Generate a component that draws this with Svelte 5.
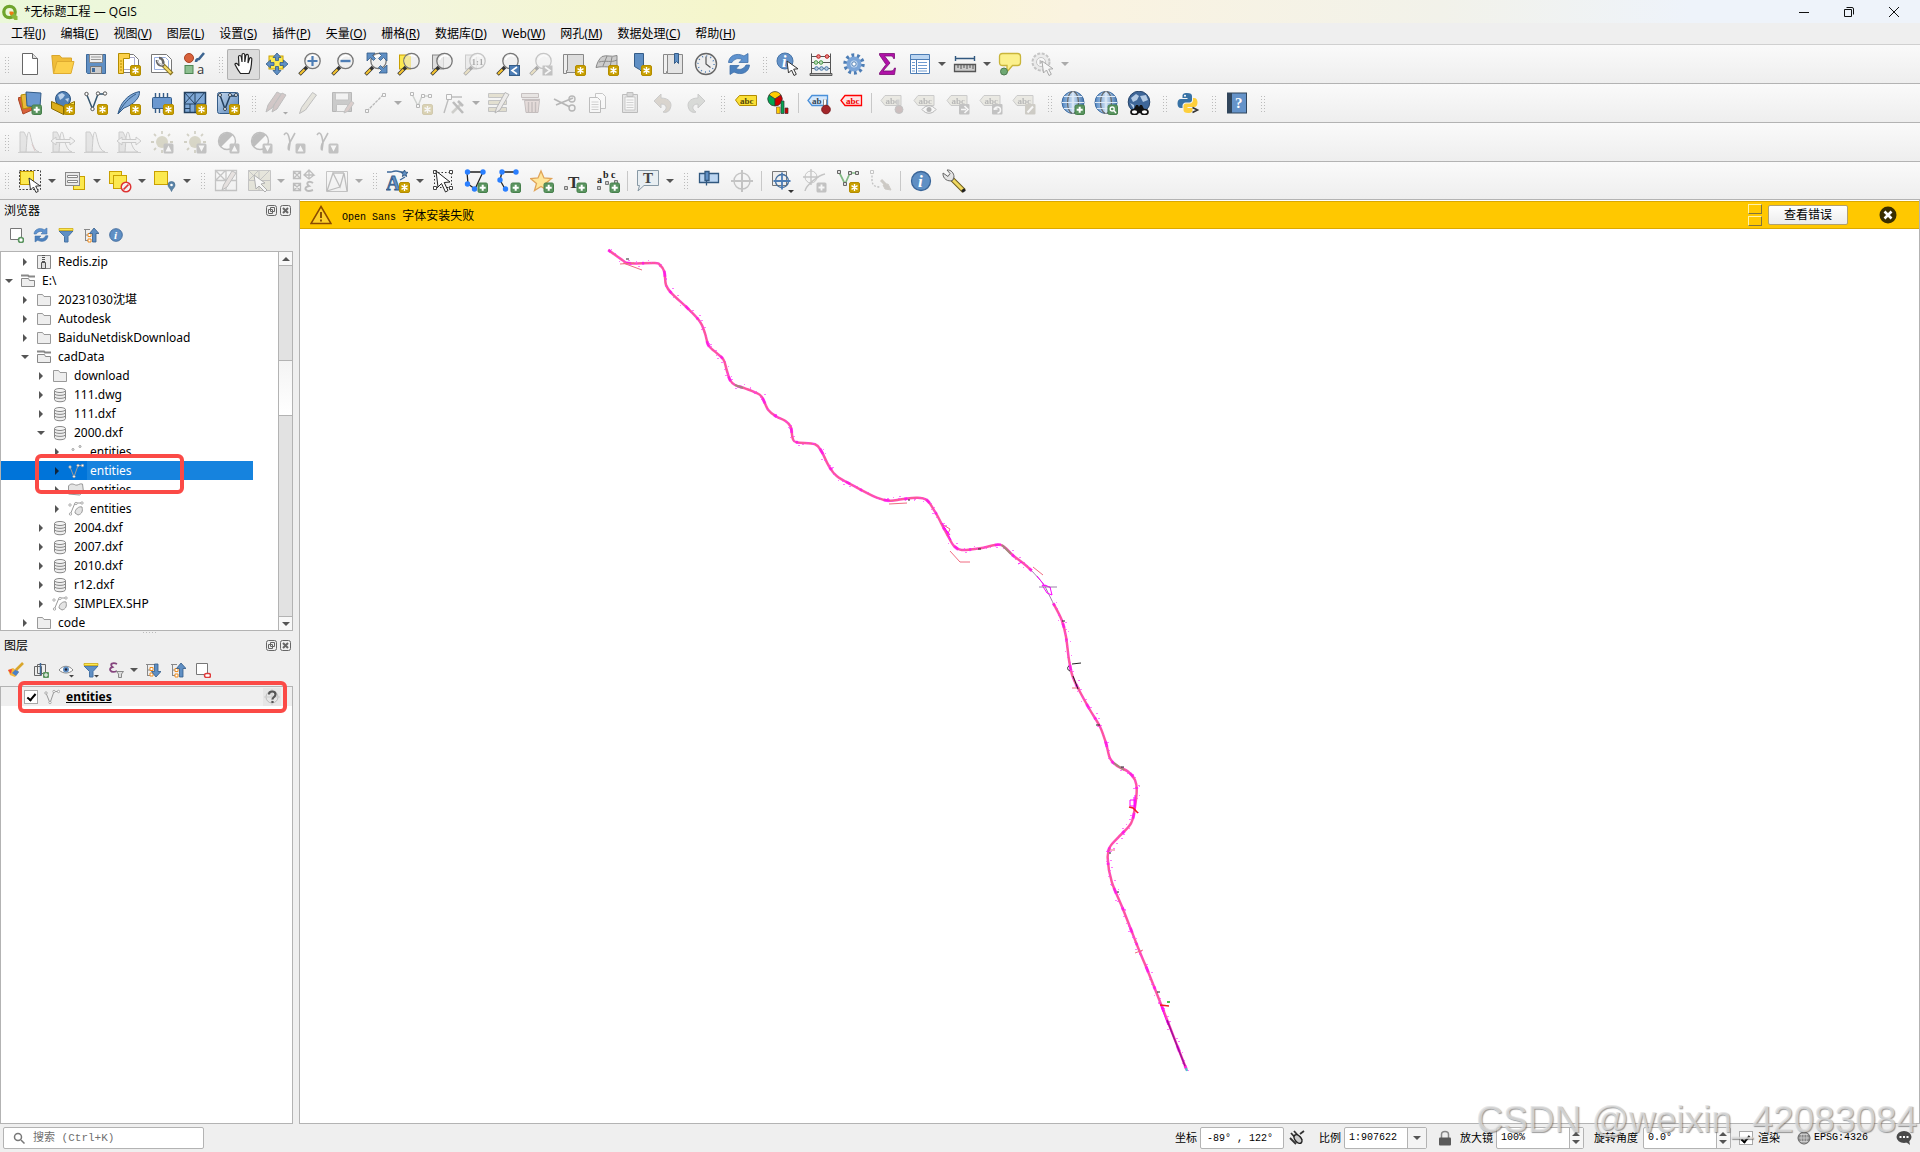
<script lang="ts">
  type Item = { icon?: string; label?: string; drop?: boolean; off?: boolean; active?: boolean; sep?: boolean };

  // "name!" = disabled, "name>" = has a drop-down, "name*" = pressed, "|" = separator
  const parse = (list: string): Item[] =>
    list.split(' ').map((word) =>
      word === '|'
        ? { sep: true }
        : {
            icon: word.replace(/[!>*]/g, ''),
            label: word.replace(/[!>*]/g, '').replace(/-/g, ' '),
            off: word.includes('!'),
            drop: word.includes('>'),
            active: word.includes('*')
          }
    );

  const toolbars: Item[][][] = [
    [
      'new open save layout layout-manager style',
      'hand* pan-selection zoom-in zoom-out zoom-full zoom-selection zoom-layer zoom-native! zoom-last zoom-next! new-map new-3d new-bookmark bookmarks clock refresh',
      'identify abacus gear sigma table> ruler> tip action!>'
    ],
    [
      'sources geopackage shapefile spatialite memory mesh gpx',
      'edits! pencil! save-edits! add-line!> add-vertex! vertex-tool!> multi-edit! trash! cut! copy! paste! undo! redo!',
      'label diagram | pin-label red-label | pin-off! show-label! move-label! rotate-label! edit-label!',
      'globe-add globe-search globe-find',
      'python',
      'help',
      ''
    ],
    ['hist-a! hist-stretch! hist-b! hist-stretch! sun-up! sun-down! contrast-up! contrast-down! gamma-up! gamma-down!'],
    [
      'select> select-form> deselect> select-place>',
      'mesh-edit! mesh-select!> mesh-transform! mesh-force!>',
      'annotation> edit-nodes polygon polyline star text text-line | callout>',
      'georef cross! | snap-area snap-cross! vertex-new trace! | info wrench'
    ]
  ].map((bar) => bar.map(parse));

  const menus = [
    ['工程', 'J'], ['编辑', 'E'], ['视图', 'V'], ['图层', 'L'], ['设置', 'S'], ['插件', 'P'], ['矢量', 'O'],
    ['栅格', 'R'], ['数据库', 'D'], ['Web', 'W'], ['网孔', 'M'], ['数据处理', 'C'], ['帮助', 'H']
  ];

  const tree = [
    { d: 1, icon: 'zip', name: 'Redis.zip' },
    { d: 0, icon: 'folder-open', name: 'E:\\', open: true },
    { d: 1, icon: 'folder', name: '20231030沈堪' },
    { d: 1, icon: 'folder', name: 'Autodesk' },
    { d: 1, icon: 'folder', name: 'BaiduNetdiskDownload' },
    { d: 1, icon: 'folder-open', name: 'cadData', open: true },
    { d: 2, icon: 'folder', name: 'download' },
    { d: 2, icon: 'db', name: '111.dwg' },
    { d: 2, icon: 'db', name: '111.dxf' },
    { d: 2, icon: 'db', name: '2000.dxf', open: true },
    { d: 3, icon: 'points', name: 'entities' },
    { d: 3, icon: 'lines', name: 'entities', selected: true },
    { d: 3, icon: 'polys', name: 'entities' },
    { d: 3, icon: 'geoms', name: 'entities' },
    { d: 2, icon: 'db', name: '2004.dxf' },
    { d: 2, icon: 'db', name: '2007.dxf' },
    { d: 2, icon: 'db', name: '2010.dxf' },
    { d: 2, icon: 'db', name: 'r12.dxf' },
    { d: 2, icon: 'geoms', name: 'SIMPLEX.SHP' },
    { d: 1, icon: 'folder', name: 'code' }
  ];

  type P = [number, number];
  const third = (ox: number, oy: number, flat: number[]): P[] => {
    const out: P[] = [];
    for (let i = 0; i < flat.length; i += 2) out.push([ox + flat[i] / 3, oy + flat[i + 1] / 3]);
    return out;
  };
  const upper = third(600, 230, [25, 60, 70, 92, 88, 100, 165, 99, 180, 105, 193, 125, 198, 165, 215, 190, 260, 232, 300, 275, 315, 310, 325, 345, 345, 365, 370, 388, 380, 420, 390, 450, 405, 465, 435, 475, 465, 487, 485, 500, 505, 540, 530, 560, 555, 572, 572, 590, 578, 625, 590, 637, 645, 643, 665, 665, 685, 705, 710, 738, 760, 767, 830, 803, 870, 812, 905, 808, 950, 803, 980, 810, 1005, 845, 1030, 892]);
  const middle = third(880, 480, [190, 142, 205, 170, 222, 198, 245, 210, 300, 205, 350, 194, 372, 200, 400, 227, 430, 250, 455, 272]);
  const gap = third(880, 480, [455, 272, 490, 312, 505, 340, 520, 370]);
  const lower = [
    ...third(880, 480, [520, 370, 545, 420, 558, 470, 567, 540, 578, 590, 597, 630, 630, 690, 660, 740]),
    ...third(1050, 700, [168, 130, 180, 175, 200, 197, 235, 215, 255, 240, 260, 270, 255, 320, 243, 370, 205, 412, 180, 440, 173, 475, 185, 545, 220, 630, 265, 745, 290, 805, 330, 905, 360, 982, 410, 1110])
  ];
  function smooth(p: P[]): string {
    let d = `M${p[0][0].toFixed(1)} ${p[0][1].toFixed(1)}`;
    for (let i = 0; i < p.length - 1; i++) {
      const a = p[Math.max(i - 1, 0)], b = p[i], c = p[i + 1], e = p[Math.min(i + 2, p.length - 1)];
      const n = [b[0] + (c[0] - a[0]) / 6, b[1] + (c[1] - a[1]) / 6, c[0] - (e[0] - b[0]) / 6, c[1] - (e[1] - b[1]) / 6, c[0], c[1]];
      d += 'C' + n.map((v) => v.toFixed(1)).join(' ');
    }
    return d;
  }
  // small survey marks scattered along the alignment
  function marks(p: P[]): string {
    let d = '', seed = 7;
    const rnd = () => (seed = (seed * 16807) % 2147483647) / 2147483647;
    for (let i = 0; i < p.length - 1; i++) {
      const [x0, y0] = p[i], [x1, y1] = p[i + 1];
      const steps = Math.max(1, Math.round(Math.hypot(x1 - x0, y1 - y0) / 4));
      for (let s = 0; s < steps; s++) {
        const t = (s + rnd()) / steps;
        const x = x0 + (x1 - x0) * t + (rnd() - 0.5) * 7, y = y0 + (y1 - y0) * t + (rnd() - 0.5) * 6;
        d += `M${x.toFixed(0)} ${y.toFixed(0)}h${rnd() > 0.5 ? 2 : 1}`;
      }
    }
    return d;
  }
  const routes = [upper, middle, lower];
  const route = routes.map(smooth).join('');
  const specks = routes.map(marks).join('');
</script>

<svg class="paints" width="0" height="0" aria-hidden="true">
  <defs>
    <linearGradient id="g-blue" x2="1" y2="1"><stop offset="0" stop-color="#c5d9ef" /><stop offset="1" stop-color="#5583b8" /></linearGradient>
    <linearGradient id="g-globe"><stop offset="0" stop-color="#4d83c0" /><stop offset=".5" stop-color="#cfe2f5" /><stop offset="1" stop-color="#4173ad" /></linearGradient>
  </defs>
</svg>
<svg class="symbols" aria-hidden="true">
  <symbol id="b-new" viewBox="0 0 24 24"><rect x="13.5" y="13.5" width="10" height="10" rx="1.5" fill="#c9a000" stroke="#b38c00" /><path d="M18.5 15v7M15.5 16.7l6 3.600M21.5 16.7l-6 3.600" stroke="#fff" stroke-width="1.400" /></symbol>
  <symbol id="b-add" viewBox="0 0 24 24"><rect x="14" y="14" width="9.5" height="9.5" rx="1.5" fill="#5b9560" stroke="#47804c" /><path d="M18.7 15.7v6M15.7 18.7h6" stroke="#fff" stroke-width="2" /></symbol>
  <symbol id="b-up" viewBox="0 0 24 24"><rect x="13.5" y="13.5" width="10" height="10" rx="1.5" fill="#777" /><path d="M15.5 21.5l3-6 3 6z" fill="#fff" /></symbol>
  <symbol id="b-down" viewBox="0 0 24 24"><rect x="13.5" y="13.5" width="10" height="10" rx="1.5" fill="#777" /><path d="M15.5 15.5l3 6 3-6z" fill="#fff" /></symbol>
  <symbol id="b-lens" viewBox="0 0 24 24"><path d="M1.5 22.5l7.5-7.5" stroke="#333" stroke-width="3.600" /><path d="M2 22l4.500-4.500" stroke="#f5c430" stroke-width="2.200" /><circle cx="14.5" cy="9" r="7.7" fill="#eee" fill-opacity=".75" stroke="#777" stroke-width="1.300" /><path d="M9.500 8a5.500 5.500 0 0 1 9-3" fill="none" stroke="#fff" stroke-width="1.500" /></symbol>
  <symbol id="b-cursor" viewBox="0 0 24 24"><path d="M11 9l1.500 12 3-3 2.500 5.500 2.300-1.200-2.600-5.100 4.300-.4z" fill="#fff" stroke="#333" /></symbol>

  <symbol id="i-new" viewBox="0 0 24 24"><path d="M4.500 1.500h10l5 5v16h-15z" fill="#fff" stroke="#666" /><path d="M14.500 1.500v5h5" fill="#ddd" stroke="#666" /></symbol>
  <symbol id="i-open" viewBox="0 0 24 24"><path d="M2.500 21.500L.8 3.500h8l2 2.500h9.700v4" fill="#f0bd39" stroke="#d9a62c" /><path d="M2.500 21.500l3.500-12h17l-3 12z" fill="#fcd04b" stroke="#dfac30" /></symbol>
  <symbol id="i-save" viewBox="0 0 24 24"><path d="M2.500 2.500h19v19h-18l-1-1z" fill="#5f8fc4" stroke="#3f6a9a" /><path d="M5.500 2.500h13v8h-13z" fill="#eee" stroke="#888" /><path d="M7 5h10M7 7.500h10" stroke="#999" /><path d="M6.500 14.500h11v7h-11z" fill="#ccc" stroke="#777" /><path d="M8 16h3v4H8z" fill="#3f6a9a" /></symbol>
  <symbol id="i-layout" viewBox="0 0 24 24"><path d="M2.500 2.500h14l5 5v13h-19z" fill="#fff" stroke="#777" /><path d="M4.500 5.500h13v12h-11" fill="none" stroke="#aac" /><path d="M1.500 1.500h11v5h-6v15h-5z" fill="#fcd04b" stroke="#b38c00" /><path d="M3 9h2M3 12h2M3 15h2M3 18h2" stroke="#b38c00" /><use href="#b-new" /></symbol>
  <symbol id="i-layout-manager" viewBox="0 0 24 24"><path d="M1.500 2.500h15l5 5v13h-20z" fill="#fff" stroke="#777" /><path d="M4.500 5.500h11l3 3v9h-14z" fill="none" stroke="#9ab0e0" /><path d="M13 13l9 9" stroke="#8a7420" stroke-width="4" /><path d="M14 14l7 7" stroke="#f5dc6a" stroke-width="2.200" /><path d="M7 8c0 5 4 6 7 5M9 6c3 0 5 3 4 6" fill="none" stroke="#666" stroke-width="2.600" /><path d="M7.500 8.500c1 4 4 5 6 4" fill="none" stroke="#fff" /></symbol>
  <symbol id="i-style" viewBox="0 0 24 24"><circle cx="6" cy="6" r="4.500" fill="#d9623b" stroke="#a94323" /><rect x="2" y="13.500" width="8" height="8" fill="#8dbf90" stroke="#4c8552" /><path d="M13 10c0-3 2-3 3-3l5-6" fill="none" stroke="#3d6591" stroke-width="2.600" /><text x="14" y="21.500" font-family="Open Sans" font-size="13" fill="#333">a</text></symbol>

  <symbol id="i-hand" viewBox="0 0 24 24"><path d="M8.500 21.500c-3-4-4.500-7-5.500-9 0-2 2.500-1.500 4 1.500L6.500 5c0-2 2.500-2 2.800 0l.7 5V3c0-2 2.700-2 2.800 0v7l1-6.500c.4-1.800 2.700-1.300 2.600.5L16 11l1.500-4.500c.7-1.500 2.700-.8 2.300 1C19 14 20 16 17 21.500z" fill="#fff" stroke="#222" stroke-width="1.200" /></symbol>
  <symbol id="i-pan-selection" viewBox="0 0 24 24"><rect x="4" y="4" width="14" height="13" fill="#fce94f" stroke="#c9a000" /><path d="M12 1l4 4.500h-2.500v3h-3v-3H8zM12 23l4-4.500h-2.500v-4h-3v4H8zM1 12l4.500-4v2.500H9v3H5.500V16zM23 12l-4.500-4v2.500H15v3h3.500V16z" fill="#5f8fc4" stroke="#345c88" stroke-width=".8" /></symbol>
  <symbol id="i-zoom-in" viewBox="0 0 24 24"><use href="#b-lens" /><path d="M14.500 4v10M9.500 9h10" stroke="#4d7db5" stroke-width="2.200" /></symbol>
  <symbol id="i-zoom-out" viewBox="0 0 24 24"><use href="#b-lens" /><path d="M9.500 9h10" stroke="#4d7db5" stroke-width="2.400" /></symbol>
  <symbol id="i-zoom-full" viewBox="0 0 24 24"><use href="#b-lens" /><path d="M3 1h8L8.500 3.500l3 3-2 2-3-3L3 9zM23 1h-8l2.500 2.500-3 3 2 2 3-3L23 9zM23 21h-8l2.500-2.500-3-3 2-2 3 3L23 13z" fill="#5f8fc4" stroke="#345c88" stroke-width=".8" /></symbol>
  <symbol id="i-zoom-selection" viewBox="0 0 24 24"><rect x="2.500" y="3" width="11" height="14" fill="#fce94f" stroke="#c9a000" /><use href="#b-lens" /><path d="M9 4h5v11c-5 0-7-5-7-7z" fill="#f3e58b" opacity=".8" /></symbol>
  <symbol id="i-zoom-layer" viewBox="0 0 24 24"><rect x="2.500" y="3" width="11" height="14" fill="#ddd" stroke="#888" /><use href="#b-lens" /></symbol>
  <symbol id="i-zoom-native" viewBox="0 0 24 24"><rect x="2.500" y="3" width="11" height="14" fill="#ddd" stroke="#888" /><use href="#b-lens" /><text x="8.500" y="12.500" font-family="Liberation Serif" font-weight="bold" font-size="9" fill="#333">1:1</text></symbol>
  <symbol id="i-zoom-last" viewBox="0 0 24 24"><use href="#b-lens" /><rect x="13.500" y="13.500" width="10" height="10" fill="#4d7db5" stroke="#345c88" /><path d="M21 15l-5 3.500 5 3.500" fill="none" stroke="#fff" stroke-width="1.600" /></symbol>
  <symbol id="i-zoom-next" viewBox="0 0 24 24"><use href="#b-lens" /><rect x="13.500" y="13.500" width="10" height="10" fill="#777" /><path d="M16 15l5 3.500-5 3.500" fill="none" stroke="#fff" stroke-width="1.600" /></symbol>
  <symbol id="i-new-map" viewBox="0 0 24 24"><path d="M4.500 2.500h17v18h-17z" fill="#ddd" stroke="#888" /><path d="M1.500 2.500h4v16h-1v3h-3z" fill="#eee" stroke="#888" /><use href="#b-new" /></symbol>
  <symbol id="i-new-3d" viewBox="0 0 24 24"><path d="M7 4.500c5-2 9 1 15-1v10c-6 3-13 0-21 2C2 11 4 7 7 4.500z" fill="#ccc" stroke="#888" /><path d="M4 10c7-2 12 1 18-2M12 4L8 14M17 5l-2 10" fill="none" stroke="#888" /><use href="#b-new" /></symbol>
  <symbol id="i-new-bookmark" viewBox="0 0 24 24"><path d="M6.500 1.500h9v20l-4-4-5-3z" fill="#5f8fc4" stroke="#345c88" /><use href="#b-new" /></symbol>
  <symbol id="i-bookmarks" viewBox="0 0 24 24"><path d="M6.500 2.500h15v19h-15z" fill="#e4e4e4" stroke="#888" /><path d="M2.500 2.500h4v17h-1v2h-3z" fill="#f0f0f0" stroke="#888" /><path d="M13.500 1.500h4v10l-2-2-2 2z" fill="#5f8fc4" stroke="#345c88" /></symbol>
  <symbol id="i-clock" viewBox="0 0 24 24"><circle cx="12" cy="12" r="10.500" fill="#eee" stroke="#666" stroke-width="1.400" /><circle cx="12" cy="12" r="8" fill="none" stroke="#4d7db5" stroke-width="1.500" stroke-dasharray="1 3.190" /><path d="M12 4.500V12l4.500 3.500" fill="none" stroke="#555" stroke-width="1.200" /></symbol>
  <symbol id="i-refresh" viewBox="0 0 24 24"><path d="M1.500 10.500C2 4 9 0 17 4l4-2.500v9h-9l3-3c-4-2-8-.5-10 3z" fill="#5f93cf" stroke="#3f6fa8" stroke-width=".8" /><path d="M22.500 13c-.5 7-7.500 11-15.500 7l-4 2.500v-9h9l-3 3c4 2 8 .5 10-3.500z" fill="#4b80bd" stroke="#3f6fa8" stroke-width=".8" /></symbol>

  <symbol id="i-identify" viewBox="0 0 24 24"><circle cx="9" cy="9" r="8" fill="#6593c9" stroke="#4674a8" /><text x="6" y="14.500" font-family="Liberation Serif" font-weight="bold" font-style="italic" font-size="16" fill="#fff">i</text><use href="#b-cursor" /></symbol>
  <symbol id="i-abacus" viewBox="0 0 24 24"><path d="M2.500 22V1.500M21.500 22V1.500M2 4.500h20M2 10.500h20M2 16.500h20" stroke="#555" fill="none" /><path d="M1 21.500h22v2H1z" fill="#aaa" stroke="#444" stroke-width=".8" /><g fill="#e88" stroke="#b22"><circle cx="9.500" cy="4.500" r="1.800" /><circle cx="18" cy="4.500" r="1.800" /></g><g fill="#bdb" stroke="#4a9a4a"><circle cx="7" cy="10.500" r="1.800" /><circle cx="12" cy="10.500" r="1.800" /></g><g fill="#bcd" stroke="#47a"><circle cx="7.500" cy="16.500" r="1.800" /><circle cx="12.500" cy="16.500" r="1.800" /><circle cx="17.500" cy="16.500" r="1.800" /></g></symbol>
  <symbol id="i-gear" viewBox="0 0 24 24"><circle cx="12" cy="12" r="8.700" fill="none" stroke="#4d7db5" stroke-width="4" stroke-dasharray="2.700 2.766" /><circle cx="12" cy="12" r="5.500" fill="#c9dcf1" stroke="#7ba5d8" stroke-width="4" /><circle cx="12" cy="12" r="2.200" fill="#fff" stroke="#4d7db5" /></symbol>
  <symbol id="i-sigma" viewBox="0 0 24 24"><path d="M4.500 1.500h15v5h-1c-.5-2-1.500-2.500-3-2.500H9.500l5.500 7-7 8h8c2 0 2.800-1 3.500-3h1l-1 6.500h-15v-1.500L11 12.500 4.500 3z" fill="#b012a8" stroke="#7a0c74" stroke-width=".8" /></symbol>
  <symbol id="i-table" viewBox="0 0 24 24"><path d="M2.500 2.500h19v19h-19z" fill="#fff" stroke="#4d7db5" /><path d="M3 3h18v4H3z" fill="#bcd6f2" /><path d="M2.500 7.500h19M8.500 7v14" stroke="#4d7db5" /><path d="M4 10.500h3M10 10.500h9M4 13.500h3M10 13.500h9M4 16.500h3M10 16.500h9M4 19h3M10 19h9" stroke="#6f9bd0" /></symbol>
  <symbol id="i-ruler" viewBox="0 0 24 24"><path d="M2 6.500h20M2.500 4v5M21.500 4v5" stroke="#31587f" stroke-width="1.400" /><path d="M1.500 12.500h21v7h-21z" fill="#ccc" stroke="#555" stroke-width="1.300" /><path d="M5 13v3M8 13v4M11 13v3M14 13v4M17 13v3M20 13v4" stroke="#555" /></symbol>
  <symbol id="i-tip" viewBox="0 0 24 24"><path d="M4.500 1.500h15c2 0 3 1 3 3v6c0 2-1 3-3 3h-5L9 20v-6.500H4.500c-2 0-3-1-3-3v-6c0-2 1-3 3-3z" fill="#fbf08c" stroke="#c9b53a" stroke-width="1.300" /><circle cx="6" cy="19.500" r="3.500" fill="#6fa873" stroke="#4c7a50" /></symbol>
  <symbol id="i-action" viewBox="0 0 24 24"><circle cx="10" cy="10" r="8.500" fill="#ddd" stroke="#777" stroke-width="2" stroke-dasharray="3 1.500" /><circle cx="10" cy="10" r="4.500" fill="#fff" stroke="#777" /><path d="M8.500 7.500v5l4-2.500z" fill="#666" /><use href="#b-cursor" /></symbol>

  <symbol id="i-sources" viewBox="0 0 24 24"><path d="M0 7l9-3 5 15-9 4z" fill="#d9623b" stroke="#a94323" /><path d="M3 4l11-2v14l-9 2z" fill="#e9b93b" stroke="#b38c00" /><path d="M8 1l15 1-1 14-13-1z" fill="#6b98cf" stroke="#345c88" /><use href="#b-add" /></symbol>
  <symbol id="i-geopackage" viewBox="0 0 24 24"><circle cx="12" cy="8" r="7.500" fill="#4f7fb5" stroke="#2d5480" /><path d="M7 4l4-2 3 2-2 3-3 2zM14 8l4-1-1 4z" fill="#bcd3ec" /><path d="M.5 10.500l12 5v8l-12-6z" fill="#dcae1c" stroke="#8a6d00" /><path d="M12.500 15.500l11-5v8l-11 5z" fill="#fce94f" stroke="#8a6d00" /><use href="#b-new" /></symbol>
  <symbol id="i-shapefile" viewBox="0 0 24 24"><path d="M2.500 3l6 15 5.500-15h8" fill="none" stroke="#34566f" stroke-width="1.500" /><g fill="#fff" stroke="#555"><circle cx="2.500" cy="3" r="1.700" /><circle cx="8.500" cy="18" r="1.700" /><circle cx="14" cy="2.500" r="1.700" /><circle cx="21" cy="2.500" r="1.700" /></g><use href="#b-new" /></symbol>
  <symbol id="i-spatialite" viewBox="0 0 24 24"><path d="M1 23C3 13 10 3 22.500.5 23 6 18 13 7 17z" fill="#7fa8d6" stroke="#345c88" /><path d="M1 23C6 13 12 7 19 3" fill="none" stroke="#345c88" /><use href="#b-new" /></symbol>
  <symbol id="i-memory" viewBox="0 0 24 24"><path d="M5.500 2v20M9.500 2v20M13.500 2v20M17.500 2v20" stroke="#345c88" stroke-width="1.400" /><rect x="2.500" y="6.500" width="19" height="11" rx="1" fill="#6b98cf" stroke="#345c88" /><use href="#b-new" /></symbol>
  <symbol id="i-mesh" viewBox="0 0 24 24"><rect x="1.500" y="1.500" width="21" height="20" fill="#7fa8d6" stroke="#23405f" stroke-width="1.500" /><path d="M12 1v21M1 13h21M1 1l11 12M12 1L1 13M22 1L12 13M7 13v9M1 17.500h6" stroke="#23405f" /><use href="#b-new" /></symbol>
  <symbol id="i-gpx" viewBox="0 0 24 24"><rect x="1.500" y="1.500" width="21" height="21" rx="2" fill="url(#g-blue)" stroke="#345c88" /><path d="M4 4l5 14L14 5h6" fill="none" stroke="#23405f" stroke-width="1.500" /><g fill="#fff" stroke="#345"><circle cx="4" cy="4" r="1.500" /><circle cx="9" cy="18" r="1.500" /><circle cx="14" cy="4" r="1.500" /><circle cx="20" cy="4" r="1.500" /></g><use href="#b-new" /></symbol>

  <symbol id="i-edits" viewBox="0 0 24 24"><g fill="#b07a78" stroke="#666"><path d="M1 21l2-7L12 1l4 2-9 14z" /><path d="M7 21l2-7L17 2l4 2-9 14z" /></g><path d="M18 21h5l-2.500 2.500z" fill="#333" /></symbol>
  <symbol id="i-pencil" viewBox="0 0 24 24"><path d="M1.500 22.500l2-6L14.500 1.500l4 2.500L7.500 19z" fill="#d0c9a0" stroke="#666" /></symbol>
  <symbol id="i-save-edits" viewBox="0 0 24 24"><path d="M1.500 1.500h19v19h-19z" fill="#888" stroke="#555" /><path d="M4.500 2h13v7h-13zM5.500 13.500h11v7h-11z" fill="#eee" stroke="#777" /><path d="M13 22l1.500-4L20 10l3 2-5.500 8z" fill="#d08a80" stroke="#777" /></symbol>
  <symbol id="i-add-line" viewBox="0 0 24 24"><path d="M3 20L19 4" stroke="#555" stroke-width="1.300" stroke-dasharray="3 1" /><path d="M1.500 18.500h3v3h-3zM18.500 2.500h3v3h-3z" fill="#fff" stroke="#555" /></symbol>
  <symbol id="i-add-vertex" viewBox="0 0 24 24"><path d="M3 3l6 12 4-10h8" fill="none" stroke="#8a9a8a" stroke-width="1.500" /><path d="M1.500 1.500h3v3h-3zM7.500 13.500h3v3h-3zM12.500 3.500h3v3h-3zM19.500 3.500h3v3h-3z" fill="#fff" stroke="#555" /><use href="#b-new" /></symbol>
  <symbol id="i-vertex-tool" viewBox="0 0 24 24"><path d="M2 22L7 6h13" fill="none" stroke="#666" stroke-width="1.400" /><path d="M4.500 3.500h5v5h-5z" fill="#fff" stroke="#555" /><path d="M10 22l9-9" stroke="#998" stroke-width="2.600" /><path d="M11 11l10 11M16 10l5 5" stroke="#666" stroke-width="2.600" /></symbol>
  <symbol id="i-multi-edit" viewBox="0 0 24 24"><path d="M1.500 2.500h18v4h-18zM1.500 9.500h18v4h-18zM1.500 16.500h18v4h-18z" fill="#d0c070" stroke="#777" /><path d="M8 22l1.500-5L18 1.500l4 2L13 19z" fill="#e4dcd4" stroke="#555" /></symbol>
  <symbol id="i-trash" viewBox="0 0 24 24"><path d="M1.500 2.500h17v4h-17z" fill="#d9c8c0" stroke="#866" /><path d="M4.500 9.500h15l-1.500 12h-12z" fill="#e0b0a8" stroke="#866" /><path d="M8.500 11v10M12 11v10M15.500 11v10M2 8.500h18" stroke="#866" stroke-width="1.400" /></symbol>
  <symbol id="i-cut" viewBox="0 0 24 24"><path d="M1 8l16 8M3 14L20 7" stroke="#555" stroke-width="1.800" /><circle cx="19" cy="8" r="3" fill="none" stroke="#555" stroke-width="1.400" /><circle cx="19" cy="17" r="3" fill="none" stroke="#555" stroke-width="1.400" /></symbol>
  <symbol id="i-copy" viewBox="0 0 24 24"><path d="M9.500 2.500h7l3 3v12h-10z" fill="#fff" stroke="#777" /><path d="M3.500 6.500h8l3 3v12h-11z" fill="#fff" stroke="#666" /><path d="M5.500 11h7M5.500 13.500h7M5.500 16h7M5.500 18.500h7" stroke="#999" /></symbol>
  <symbol id="i-paste" viewBox="0 0 24 24"><path d="M3.500 3.500h15v18h-15z" fill="#ccc" stroke="#666" /><path d="M6 6h10v13H6z" fill="#fff" stroke="#888" /><path d="M8 1.500h6v4H8z" fill="#aaa" stroke="#666" /><path d="M7.500 9h7M7.500 11.500h7M7.500 14h7M7.500 16.500h7" stroke="#999" /></symbol>
  <symbol id="i-undo" viewBox="0 0 24 24"><path d="M9 3v4c8 0 12 5 9 11-1 3-5 4-7 3 4-2 5-8-2-8v4L2 10z" fill="#bba27e" stroke="#888" /></symbol>
  <symbol id="i-redo" viewBox="0 0 24 24"><path d="M13 3v4C5 7 1 12 4 18c1 3 5 4 7 3-4-2-5-8 2-8v4l7-7z" fill="#a9b3a4" stroke="#888" /></symbol>

  <symbol id="i-label" viewBox="0 0 24 24"><path d="M1.500 9l4-4.500h17v10h-17z" fill="#fbe036" stroke="#b38c00" /><text x="6" y="12.500" font-family="Liberation Serif" font-weight="bold" font-size="9" fill="#54470a">abc</text></symbol>
  <symbol id="i-diagram" viewBox="0 0 24 24"><path d="M8 8L2 4a7 7 0 0 1 12 0z" fill="#fc0" stroke="#333" stroke-width=".7" /><path d="M8 8v7a7 7 0 0 1-6-11z" fill="#00a651" stroke="#333" stroke-width=".7" /><path d="M8 8v7a7 7 0 0 0 6-11z" fill="#c00" stroke="#333" stroke-width=".7" /><path d="M9.500 16h3.500v6.500H9.500z" fill="#fc0" stroke="#864" stroke-width=".7" /><path d="M14 10h3v12.500h-3z" fill="#00a651" stroke="#333" stroke-width=".7" /><path d="M18 17h3v5.500h-3z" fill="#c00" stroke="#333" stroke-width=".7" /></symbol>
  <symbol id="b-tag" viewBox="0 0 24 24"><path d="M1 9.500l4-5h16v10H5z" fill="#d9d6b5" stroke="#888" /><text x="5.500" y="12.500" font-family="Liberation Serif" font-weight="bold" font-size="9" fill="#555">abc</text></symbol>
  <symbol id="i-pin-label" viewBox="0 0 24 24"><path d="M1 9.500l4-5h15.500v10H5z" fill="#d5e8fc" stroke="#4a90d9" stroke-width="1.300" /><text x="5" y="12.500" font-family="Liberation Serif" font-weight="bold" font-size="9" fill="#345">ab</text><path d="M18 8.500v9" stroke="#888" stroke-width="4" /><path d="M18 8.500v9" stroke="#fff" stroke-width="2" /><circle cx="19" cy="18.500" r="4.300" fill="#a3262a" stroke="#7c1a1e" /></symbol>
  <symbol id="i-red-label" viewBox="0 0 24 24"><path d="M1 9.500l4-5h16.500v10H5z" fill="#fde4e4" stroke="#f00" stroke-width="1.300" /><text x="6" y="12.500" font-family="Liberation Serif" font-weight="bold" font-size="9" fill="#e00">abc</text></symbol>
  <symbol id="i-pin-off" viewBox="0 0 24 24"><use href="#b-tag" /><path d="M18 8.500v9" stroke="#999" stroke-width="3" /><circle cx="19" cy="18.500" r="4" fill="#a66" stroke="#777" /></symbol>
  <symbol id="i-show-label" viewBox="0 0 24 24"><use href="#b-tag" /><path d="M9 18.500c4-5 10-5 14 0-4 5-10 5-14 0z" fill="#fff" stroke="#555" /><circle cx="16" cy="18.500" r="2.500" fill="#555" /></symbol>
  <symbol id="i-move-label" viewBox="0 0 24 24"><use href="#b-tag" /><rect x="13" y="13" width="10.500" height="10.500" rx="1" fill="#777" /><path d="M15 18.500h5M18.500 15l3.500 3.500-3.500 3.500" fill="none" stroke="#fff" stroke-width="1.600" /></symbol>
  <symbol id="i-rotate-label" viewBox="0 0 24 24"><use href="#b-tag" /><rect x="13" y="13" width="10.500" height="10.500" rx="1" fill="#777" /><path d="M15.500 19a3 3 0 1 1 3 3M14.500 18h4" fill="none" stroke="#fff" stroke-width="1.500" /></symbol>
  <symbol id="i-edit-label" viewBox="0 0 24 24"><use href="#b-tag" /><rect x="13" y="13" width="10.500" height="10.500" rx="1" fill="#998f70" /><path d="M15.500 21.500l5.500-6" stroke="#fff" stroke-width="2" /></symbol>
  <symbol id="b-globe" viewBox="0 0 24 24"><circle cx="12" cy="11.500" r="11" fill="url(#g-globe)" stroke="#3a69a0" /><g fill="none" stroke="#666" stroke-width="1.200"><ellipse cx="12" cy="11.500" rx="5.500" ry="11" /><path d="M12 .5v22M1 11.500h22M3 5.500h18M3 17.500h18" stroke="#dfeaf6" /></g></symbol>
  <symbol id="i-globe-add" viewBox="0 0 24 24"><use href="#b-globe" /><use href="#b-add" /></symbol>
  <symbol id="i-globe-search" viewBox="0 0 24 24"><use href="#b-globe" /><rect x="14" y="14" width="9.500" height="9.500" rx="1.500" fill="#5b9560" stroke="#47804c" /><circle cx="18.200" cy="18" r="2" fill="none" stroke="#fff" stroke-width="1.300" /><path d="M19.700 19.500l2.300 2.500" stroke="#fff" stroke-width="1.300" /></symbol>
  <symbol id="i-globe-find" viewBox="0 0 24 24"><circle cx="12" cy="11" r="10.800" fill="#3f6799" stroke="#28466b" /><path d="M4 7l5-4 3 2-2 4-4 2zM13 5l6-1 2 5-5 2zM3 12l4 2v4z" fill="#b5cbe4" /><path d="M5 22l4-8h2l1 2 1-2h2l4 8z" fill="#111" /><ellipse cx="7.500" cy="21" rx="3.500" ry="2.500" fill="#fff" stroke="#111" stroke-width="1.700" /><ellipse cx="17.500" cy="21" rx="3.500" ry="2.500" fill="#fff" stroke="#111" stroke-width="1.700" /></symbol>
  <symbol id="i-python" viewBox="0 0 24 24"><path d="M11 2c-4 0-4.500 1.500-4.500 3v2h5v1H5c-2.500 0-3.500 2-3.500 4.500S2.500 17 5 17h1.500v-2.500c0-1.500 1.500-3 3-3h4c1.500 0 2.500-1 2.500-2.500V5c0-2-1.500-3-5-3z" fill="#3872a5" /><circle cx="9" cy="4.700" r="1" fill="#fff" /><path d="M12 22c4 0 4.500-1.500 4.500-3v-2h-5v-1H18c2.500 0 3.500-2 3.500-4.500S20.500 7 18 7h-1v2.500c0 1.500-1.500 3-3 3h-4c-1.500 0-2.500 1-2.500 2.500v4c0 2 1.500 3 4.500 3z" fill="#fdcf3c" /><path d="M16.500 16.500l5 2.500-5 2.500" fill="none" stroke="#333" stroke-width="1.600" /></symbol>
  <symbol id="i-help" viewBox="0 0 24 24"><path d="M2 1.500h20v21H2z" fill="#31465c" /><path d="M7 2.500h14v19H7z" fill="#6593c9" /><text x="10" y="17" font-family="Liberation Serif" font-weight="bold" font-size="15" fill="#fff">?</text></symbol>

  <symbol id="b-hist" viewBox="0 0 24 24"><path d="M2 22V2h4l3 6 2 14z" fill="#ccc" stroke="#888" /><path d="M8 22C9 10 9 2 11 2s2 18 10 20z" fill="#eee" stroke="#888" /><path d="M0 22.500h24" stroke="#999" /></symbol>
  <symbol id="i-hist-a" viewBox="0 0 24 24"><use href="#b-hist" /><path d="M14 14l3 7" stroke="#d77" /></symbol>
  <symbol id="i-hist-b" viewBox="0 0 24 24"><use href="#b-hist" /></symbol>
  <symbol id="i-hist-stretch" viewBox="0 0 24 24"><use href="#b-hist" /><path d="M0 11l5-4v2.500h14V7l5 4-5 4v-2.500H5V15z" fill="#eee" stroke="#888" /></symbol>
  <symbol id="b-sun" viewBox="0 0 24 24"><circle cx="12" cy="12" r="6" fill="#b0a85c" /><path d="M12 1v3M12 20v3M1 12h3M20 12h3M4 4l2 2M18 18l2 2M20 4l-2 2M6 18l-2 2" stroke="#a09860" stroke-width="1.800" /></symbol>
  <symbol id="i-sun-up" viewBox="0 0 24 24"><use href="#b-sun" /><use href="#b-up" /></symbol>
  <symbol id="i-sun-down" viewBox="0 0 24 24"><use href="#b-sun" /><use href="#b-down" /></symbol>
  <symbol id="b-contrast" viewBox="0 0 24 24"><circle cx="11" cy="11" r="8.500" fill="#fff" stroke="#666" stroke-width="1.400" /><path d="M5 17A8.500 8.500 0 0 1 17 5z" fill="#666" /></symbol>
  <symbol id="i-contrast-up" viewBox="0 0 24 24"><use href="#b-contrast" /><use href="#b-up" /></symbol>
  <symbol id="i-contrast-down" viewBox="0 0 24 24"><use href="#b-contrast" /><use href="#b-down" /></symbol>
  <symbol id="b-gamma" viewBox="0 0 24 24"><path d="M2 5c3-5 5 0 6 8l-1 7c-1 0-1-3 0-6L13 3" fill="none" stroke="#666" stroke-width="1.600" /></symbol>
  <symbol id="i-gamma-up" viewBox="0 0 24 24"><use href="#b-gamma" /><use href="#b-up" /></symbol>
  <symbol id="i-gamma-down" viewBox="0 0 24 24"><use href="#b-gamma" /><use href="#b-down" /></symbol>

  <symbol id="i-select" viewBox="0 0 24 24"><rect x="1.500" y="1.500" width="21" height="19" fill="none" stroke="#444" stroke-dasharray="2 1.500" /><rect x="2.500" y="2.500" width="13" height="13" fill="#fce94f" stroke="#c9a000" /><use href="#b-cursor" /></symbol>
  <symbol id="i-select-form" viewBox="0 0 24 24"><rect x="10.500" y="7.500" width="11" height="13" fill="#fce94f" stroke="#c9a000" /><rect x="2.500" y="3.500" width="14" height="13" fill="#e8e8e8" stroke="#888" /><path d="M4.500 6.500h10v2h-10zM4.500 11.500h10v2h-10z" fill="#fff" stroke="#888" /></symbol>
  <symbol id="i-deselect" viewBox="0 0 24 24"><rect x="1.500" y="2.500" width="12" height="12" fill="#fce94f" stroke="#c9a000" /><rect x="5.500" y="6.500" width="13" height="13" fill="#fce94f" stroke="#c9a000" /><circle cx="18" cy="18" r="5.500" fill="#d33" /><circle cx="18" cy="18" r="3.500" fill="#eee" stroke="#fff" /><path d="M15.500 20.500l5-5" stroke="#d33" stroke-width="1.700" /></symbol>
  <symbol id="i-select-place" viewBox="0 0 24 24"><rect x="1.500" y="2.500" width="13" height="13" fill="#fce94f" stroke="#c9a000" /><path d="M18.500 22.500c-1-3-3.500-4-3.500-6.500a3.500 3.500 0 0 1 7 0c0 2.500-2.500 3.500-3.500 6.500z" fill="#5a84a8" stroke="#3d6485" stroke-width=".6" /><circle cx="18.500" cy="16" r="1.300" fill="#fff" /></symbol>
  <symbol id="i-mesh-edit" viewBox="0 0 24 24"><path d="M1.500 1.500h21v20h-21zM1 11.500h21M12 1v21M1 1l11 11M12 1L1 12" fill="none" stroke="#777" stroke-width="1.300" /><path d="M8 21l1.500-5L18 2l4 2-9 14z" fill="#d9c0b8" stroke="#666" /></symbol>
  <symbol id="i-mesh-select" viewBox="0 0 24 24"><path d="M1.500 1.500h22v20h-22z" fill="#d0cc98" stroke="#777" /><path d="M1 11.500h22M12 1v21M1 1l11 11M12 1L1 12M23 1L12 12" stroke="#777" /><path d="M7 6l2 14 3-3 6 6 2-2-6-6 4-1z" fill="#fff" stroke="#444" /></symbol>
  <symbol id="i-mesh-transform" viewBox="0 0 24 24"><path d="M1.500 2.500h7v7h-7zM1.500 14.500h7v7h-7zM1 2l8 8M9 2l-8 8M1 14l8 8M9 14l-8 8M17 1v9M12 6h10l-5-5-5 5 5 4 5-4" fill="none" stroke="#666" stroke-width="1.300" /><path d="M21 14c-4-3-8 0-4 3-6 1-4 7 4 4" fill="none" stroke="#666" stroke-width="2" /></symbol>
  <symbol id="i-mesh-force" viewBox="0 0 24 24"><path d="M1.500 2.500h21v20h-21z" fill="none" stroke="#777" /><path d="M2 22L8 4l7 14 4-14 3 18M8 4h11M2 22l13-4" fill="none" stroke="#666" stroke-width="1.300" /></symbol>
  <symbol id="i-annotation" viewBox="0 0 24 24"><path d="M1 3h4c2 0 1-1 5-1s5 2 8 1M14 11l5-3" fill="none" stroke="#3f6a9a" stroke-width="1.400" /><path d="M18.500 1l1 2.200 2.500.2-2 1.700.6 2.400-2.100-1.300-2.100 1.300.6-2.400-2-1.700 2.500-.2z" fill="#5f8fc4" stroke="#345c88" /><text x="0" y="20.500" font-family="Liberation Serif" font-weight="bold" font-size="20" fill="#5f8fc4" stroke="#345c88" stroke-width=".8">A</text><use href="#b-new" /></symbol>
  <symbol id="i-edit-nodes" viewBox="0 0 24 24"><path d="M3.500 3.500h17v15h-17z" fill="none" stroke="#333" stroke-dasharray="1.500 2" /><path d="M2.500 1.500h3v3h-3zM18.500 1.500h3v3h-3zM2.500 17.500h3v3h-3zM18.500 17.500h3v3h-3z" fill="#fff" stroke="#444" /><path d="M5 2l2 16 3.500-3.500 4 8.500 2.500-1.500-3.800-8L19 13z" fill="#fff" stroke="#222" /></symbol>
  <symbol id="i-polygon" viewBox="0 0 24 24"><path d="M3 3h16l-8 17-7-5z" fill="none" stroke="#222" stroke-width="1.300" /><g fill="#2a7fff"><circle cx="3.500" cy="3" r="2.700" /><circle cx="19" cy="3" r="2.700" /><circle cx="3.500" cy="15" r="2.700" /><circle cx="10.500" cy="20" r="2.700" /></g><use href="#b-add" /></symbol>
  <symbol id="i-polyline" viewBox="0 0 24 24"><path d="M19 3H5L3 11l5 9" fill="none" stroke="#222" stroke-width="1.300" /><g fill="#2a7fff"><circle cx="5" cy="3" r="2.700" /><circle cx="19" cy="3" r="2.700" /><circle cx="3" cy="11" r="2.700" /><circle cx="8.500" cy="20" r="2.700" /></g><use href="#b-add" /></symbol>
  <symbol id="i-star" viewBox="0 0 24 24"><path d="M11 2l3 7 7.500.5-6 5 2 7-6.500-4-6.500 4 2-7-6-5L8 9z" fill="#ffe69a" stroke="#e0a458" stroke-width="1.300" /><use href="#b-add" /></symbol>
  <symbol id="i-text" viewBox="0 0 24 24"><text x="5" y="19" font-family="Liberation Serif" font-weight="bold" font-size="17" fill="#333">T</text><path d="M1.500 17.500h3v3h-3z" fill="#ccc" stroke="#777" /><use href="#b-add" /></symbol>
  <symbol id="i-text-line" viewBox="0 0 24 24"><g font-family="Liberation Serif" font-weight="bold" font-size="10" fill="#222"><text x="1" y="14">a</text><text x="7" y="9">b</text><text x="15" y="9">c</text></g><path d="M1.500 17.500h3v3h-3zM9.500 12.500h3v3h-3zM18.500 11.500h3v3h-3z" fill="#ccc" stroke="#777" /><use href="#b-add" /></symbol>
  <symbol id="i-callout" viewBox="0 0 24 24"><path d="M1.500 1.500h21v15H8l-6 5.500 1.500-5.500h-2z" fill="#e8eef2" stroke="#8899a5" /><text x="7" y="14" font-family="Liberation Serif" font-weight="bold" font-size="15" fill="#444">T</text></symbol>
  <symbol id="i-georef" viewBox="0 0 24 24"><path d="M2.500 4.500h19v9h-19z" fill="#bcd6f2" stroke="#31587f" stroke-width="1.300" /><path d="M8 2.500h4v9H8zM9.500 11.500v5" fill="#5f8fc4" stroke="#31587f" stroke-width="1.300" /></symbol>
  <symbol id="i-cross" viewBox="0 0 24 24"><circle cx="12" cy="12" r="8" fill="none" stroke="#777" stroke-width="1.400" /><path d="M12 1v22M1 12h22" stroke="#777" stroke-width="2" /></symbol>
  <symbol id="i-snap-area" viewBox="0 0 24 24"><path d="M2.500 2.500h14v14h-14z" fill="#eee" stroke="#777" /><circle cx="12" cy="12" r="6.500" fill="none" stroke="#3f6a9a" stroke-width="1.300" /><path d="M12 3.500v17M3.500 12h17" stroke="#4d7db5" stroke-width="1.800" /><path d="M18 21h6l-3 3z" fill="#333" /></symbol>
  <symbol id="i-snap-cross" viewBox="0 0 24 24"><circle cx="8" cy="8" r="6" fill="none" stroke="#777" /><path d="M8 0v16M0 8h16M2 22c1-6 14-16 20-17" stroke="#777" stroke-width="1.400" fill="none" /><rect x="13.500" y="13.500" width="10" height="10" rx="1.500" fill="#777" /><path d="M18.500 15.500v6M15.500 18.500h6" stroke="#fff" stroke-width="1.800" /></symbol>
  <symbol id="i-vertex-new" viewBox="0 0 24 24"><path d="M3 3l6 12 5-11h8" fill="none" stroke="#7fb883" stroke-width="1.700" /><path d="M1.500 1.500h3v3h-3zM7.500 13.500h3v3h-3zM12.500 2.500h3v3h-3zM19.500 2.500h3v3h-3z" fill="#ddd" stroke="#666" /><use href="#b-new" /></symbol>
  <symbol id="i-trace" viewBox="0 0 24 24"><path d="M3 3v8c0 6 4 7 8 7" fill="none" stroke="#777" stroke-width="1.400" stroke-dasharray="2 1.500" /><path d="M1.500 1.500h3v3h-3z" fill="#fff" stroke="#777" /><path d="M12 11l5 5" stroke="#998870" stroke-width="3" /><path d="M14 16l5-1 3 6-6-1z" stroke="#998870" fill="#998870" /></symbol>
  <symbol id="i-info" viewBox="0 0 24 24"><circle cx="12" cy="12" r="9.500" fill="#5f8fc4" stroke="#3a6598" stroke-width="1.300" /><text x="9" y="18" font-family="Liberation Serif" font-weight="bold" font-style="italic" font-size="17" fill="#fff">i</text></symbol>
  <symbol id="i-wrench" viewBox="0 0 24 24"><path d="M9 9l13 13" stroke="#6b5c1c" stroke-width="5" /><path d="M11 11l10 10" stroke="#f0d860" stroke-width="3" /><path d="M1 4c-.5 6 5 9 9.500 7.500L12 8C12 4 9 .5 5 1l3 3.500-2 3z" fill="#e4e4e4" stroke="#666" /><path d="M20 22.500l3-2" stroke="#222" stroke-width="3" /></symbol>

  <symbol id="s-add" viewBox="0 0 16 16"><path d="M2.500 1.500h11v11h-11z" fill="#fff" stroke="#777" /><circle cx="13" cy="13" r="2.500" fill="#fff" stroke="#5b9560" stroke-width="1.600" /></symbol>
  <symbol id="s-filter" viewBox="0 0 16 16"><path d="M1 4h14l-5 5.500V15H6.500V9.500z" fill="#5f8fc4" stroke="#4673a5" /><path d="M1 1.500h14v2H1z" fill="#fce94f" stroke="#c9a000" stroke-width=".7" /></symbol>
  <symbol id="s-collapse" viewBox="0 0 16 16"><path d="M1 2.500h6M2.500 2v12M2.500 8h3M2.500 13.500h3" stroke="#888" fill="none" /><path d="M5 6.500h3v3H5zM5 12h3v3H5z" fill="#fff" stroke="#f08c1c" /><path d="M11 1l5 5.500h-3V15H9.500V6.500H6.500z" fill="#5f8fc4" stroke="#345c88" stroke-width=".8" /></symbol>
  <symbol id="s-expand" viewBox="0 0 16 16"><path d="M1 2.500h9M2.500 2v12M2.500 8h3M2.500 13.500h3" stroke="#888" fill="none" /><path d="M5 5.500h3v3H5zM5 11h3v3H5z" fill="#fff" stroke="#f08c1c" /><path d="M11 15l5-5.500h-3V2H9.500v7.500H6.500z" fill="#5f8fc4" stroke="#345c88" stroke-width=".8" /></symbol>
  <symbol id="s-brush" viewBox="0 0 16 16"><path d="M0 8l5-2 6 4-4 5-5-2z" fill="#f4b63a" /><path d="M0 8l4-1-1 5z" fill="#e44" /><path d="M4 11l4-4 3 3-3 4z" fill="#4a80c8" /><path d="M8 8l7-7" stroke="#d9a62c" stroke-width="2.600" /></symbol>
  <symbol id="s-group" viewBox="0 0 16 16"><path d="M1.500 4.500h7v9h-7zM4.500 2.500h8v9h-8z" fill="#eee" stroke="#666" /><path d="M7.500 1v12" stroke="#3f6a9a" stroke-width="1.500" /><rect x="10" y="10" width="6" height="6" rx="1" fill="#5b9560" /><path d="M13 11v4M11 13h4" stroke="#fff" /></symbol>
  <symbol id="s-eye" viewBox="0 0 16 16"><path d="M1 8c4-5 10-5 14 0-4 4-10 4-14 0z" fill="#fff" stroke="#888" /><circle cx="8" cy="7.500" r="3" fill="#5f8fc4" /><circle cx="8" cy="7.500" r="1.200" fill="#223" /><path d="M11 13h5l-2.500 2.500z" fill="#444" /></symbol>
  <symbol id="s-filter-drop" viewBox="0 0 16 16"><use href="#s-filter" /><path d="M11 13h5l-2.500 2.500z" fill="#444" /></symbol>
  <symbol id="s-expr" viewBox="0 0 16 16"><path d="M9 2C5 0 1 2 4.500 5 0 6 2 12 9 9" fill="none" stroke="#85457e" stroke-width="1.800" /><path d="M8.500 9.500h7l-2 2.500v3.500h-3V12z" fill="#ddd" stroke="#888" /></symbol>
  <symbol id="s-remove" viewBox="0 0 16 16"><path d="M1.500 1.500h11v11h-11z" fill="#fff" stroke="#777" /><rect x="9.500" y="11.500" width="6" height="4" rx="2" fill="#fff" stroke="#e03c3c" stroke-width="1.500" /></symbol>

  <symbol id="t-folder" viewBox="0 0 16 16"><path d="M1.500 2.500h5l1.500 2h6.500v9h-13z" fill="#eee" stroke="#999" /></symbol>
  <symbol id="t-folder-open" viewBox="0 0 16 16"><path d="M1 2.500h7l1 1h6" stroke="#888" stroke-width="2" fill="none" /><path d="M1.500 5.500h7l1 2h5v6h-13z" fill="#eee" stroke="#888" /></symbol>
  <symbol id="t-db" viewBox="0 0 16 16"><path d="M2.500 3.500v9c0 3 11 3 11 0v-9" fill="#eee" stroke="#888" /><ellipse cx="8" cy="3.500" rx="5.500" ry="2" fill="#f5f5f5" stroke="#888" /><path d="M2.500 6.500c0 2.500 11 2.500 11 0M2.500 9.500c0 2.500 11 2.500 11 0" fill="none" stroke="#888" /></symbol>
  <symbol id="t-zip" viewBox="0 0 16 16"><path d="M1.500 1.500h13v13h-13z" fill="#eee" stroke="#888" /><path d="M7.500 1v9" stroke="#555" stroke-width="3" stroke-dasharray="1 1" /><path d="M5.500 8.500h4v6h-4z" fill="#ddd" stroke="#555" /></symbol>
  <symbol id="t-points" viewBox="0 0 16 16"><g fill="#fff" stroke="#999"><circle cx="5" cy="5.500" r="1" /><circle cx="12" cy="2.500" r="1" /></g></symbol>
  <symbol id="t-lines" viewBox="0 0 16 16"><path d="M2 4l4 10L10 2.500h5" fill="none" stroke="#999" /><g fill="#fff" stroke="#999" stroke-width=".8"><circle cx="2" cy="4" r="1.200" /><circle cx="6" cy="13.500" r="1.200" /><circle cx="10" cy="2.500" r="1.200" /><circle cx="14.500" cy="2.500" r="1.200" /></g></symbol>
  <symbol id="t-polys" viewBox="0 0 16 16"><path d="M.5 12V4c2-3 5-2 7-1s4-2 7-1l1 8-4 3z" fill="#e4e4e4" stroke="#999" /></symbol>
  <symbol id="t-geoms" viewBox="0 0 16 16"><path d="M2 14L7 2h7" fill="none" stroke="#999" /><path d="M7 12c0-4 4-7 7-6 1 4 0 7-4 8z" fill="#e4e4e4" stroke="#999" /><g fill="#fff" stroke="#999" stroke-width=".8"><circle cx="2" cy="4" r="1.200" /><circle cx="2.500" cy="13" r="1.200" /><circle cx="8" cy="2.500" r="1.200" /><circle cx="14" cy="2" r="1.200" /></g></symbol>
</svg>

{#snippet dockButtons(name: string)}
  <button class="dock-btn" aria-label="浮动 {name}"><svg viewBox="0 0 11 11"><rect x=".5" y=".5" width="10" height="10" rx="2" /><path d="M4.500 2.500h4v4h-4zM2.500 4.500h4v4h-4z" /></svg></button>
  <button class="dock-btn" aria-label="关闭 {name}"><svg viewBox="0 0 11 11"><rect x=".5" y=".5" width="10" height="10" rx="2" /><path d="M3 3l5 5M8 3L3 8" stroke-width="2" /></svg></button>
{/snippet}

<div class="app">
  <header class="title">
    <svg class="logo" viewBox="0 0 16 16" aria-hidden="true"><circle cx="7.500" cy="8" r="5.700" fill="none" stroke="#6fa52c" stroke-width="3.300" /><path d="M8 8h3l4.500 4.500V16h-3L8 11z" fill="#8cb83a" /><path d="M7.500 7.500h3l1.500 1.500-2.500 2.500-2-2z" fill="#ee7913" /></svg>
    <h1>*无标题工程 — QGIS</h1>
    <div class="window-buttons">
      <button aria-label="最小化"><svg viewBox="0 0 12 12"><path d="M1 6.500h10" /></svg></button>
      <button aria-label="还原"><svg viewBox="0 0 12 12"><path d="M1.500 3.500h7v7h-7zM3.500 1.500H9a1.500 1.500 0 0 1 1.500 1.500v5.500" /></svg></button>
      <button aria-label="关闭"><svg viewBox="0 0 12 12"><path d="M1 1l10 10M11 1L1 11" /></svg></button>
    </div>
  </header>

  <nav class="menu">
    {#each menus as [name, key]}
      <button>{name}(<u>{key}</u>)</button>
    {/each}
  </nav>

  {#each toolbars as groups}
    <div class="toolbar" role="toolbar">
      {#each groups as items}
        <span class="grip"></span>
        {#each items as item}
          {#if item.sep}
            <span class="sep"></span>
          {:else if item.icon}
            <button class="tool" class:active={item.active} disabled={item.off} aria-label={item.label}>
              <svg aria-hidden="true"><use href="#i-{item.icon}" /></svg>
            </button>
            {#if item.drop}<button class="drop" disabled={item.off} aria-label="{item.label} menu"></button>{/if}
          {/if}
        {/each}
      {/each}
    </div>
  {/each}

  <main>
    <aside>
      <section class="browser">
        <div class="dock-title"><h2>浏览器</h2>{@render dockButtons('浏览器')}</div>
        <div class="dock-tools">
          <button aria-label="添加图层"><svg><use href="#s-add" /></svg></button>
          <button aria-label="刷新"><svg><use href="#i-refresh" /></svg></button>
          <button aria-label="过滤"><svg><use href="#s-filter" /></svg></button>
          <button aria-label="全部折叠"><svg><use href="#s-collapse" /></svg></button>
          <button aria-label="属性"><svg><use href="#i-info" /></svg></button>
        </div>
        <div class="tree-box">
          <ul class="tree">
            {#each tree as row}
              <li class="level-{row.d}" class:selected={row.selected}>
                <span class="twist" class:open={row.open}></span>
                <svg aria-hidden="true"><use href="#t-{row.icon}" /></svg>
                <span>{row.name}</span>
              </li>
            {/each}
          </ul>
          <div class="scroll">
            <button aria-label="向上滚动"><i class="up"></i></button>
            <div class="track"><div class="thumb"></div></div>
            <button aria-label="向下滚动"><i class="down"></i></button>
          </div>
          <span class="mark mark-tree"></span>
        </div>
      </section>
      <div class="splitter"><span></span></div>
      <section class="layers">
        <div class="dock-title"><h2>图层</h2>{@render dockButtons('图层')}</div>
        <div class="dock-tools">
          <button aria-label="样式"><svg><use href="#s-brush" /></svg></button>
          <button aria-label="添加组"><svg><use href="#s-group" /></svg></button>
          <button aria-label="可见性"><svg><use href="#s-eye" /></svg></button>
          <button aria-label="过滤图例"><svg><use href="#s-filter-drop" /></svg></button>
          <button aria-label="表达式过滤"><svg><use href="#s-expr" /></svg></button>
          <button class="drop" aria-label="表达式菜单"></button>
          <button aria-label="展开"><svg><use href="#s-expand" /></svg></button>
          <button aria-label="折叠"><svg><use href="#s-collapse" /></svg></button>
          <button aria-label="移除图层"><svg><use href="#s-remove" /></svg></button>
        </div>
        <div class="layer-box">
          <div class="layer">
            <label><input type="checkbox" checked /><svg aria-hidden="true"><use href="#t-lines" /></svg><b>entities</b></label>
            <button aria-label="图层没有坐标系"><svg viewBox="0 0 16 16"><circle cx="8" cy="8" r="6" fill="none" stroke="#bbb" /><path d="M8 0v16M0 8h16" stroke="#ccc" /><path d="M5 5.500c0-4 6.500-4 6.500 0 0 2.500-3 2.500-3 5M8.500 12v2" fill="none" stroke="#555" stroke-width="2.200" /></svg></button>
          </div>
          <span class="mark mark-layer"></span>
        </div>
      </section>
    </aside>

    <section class="canvas">
      <div class="message">
        <svg class="warn" viewBox="0 0 22 20" aria-hidden="true"><path d="M11 1.500L21 18.500H1z" fill="#fdd02a" stroke="#8a4b00" stroke-width="1.500" /><path d="M11 7v6M11 14.500v2" stroke="#7a4300" stroke-width="1.800" /></svg>
        <p><span class="mono">Open Sans</span> 字体安装失败</p>
        <div class="spin-old"><i></i><i></i></div>
        <button class="details">查看错误</button>
        <button class="close" aria-label="关闭消息"><svg viewBox="0 0 18 18"><circle cx="9" cy="9" r="8.500" fill="#3a2e00" /><path d="M5.500 5.500l7 7M12.500 5.500l-7 7" stroke="#fff" stroke-width="2.600" /></svg></button>
      </div>
      <svg class="map" viewBox="300 229 1619 888" preserveAspectRatio="xMinYMin meet" role="img" aria-label="地图" fill="none">
        <path d={route} stroke="#ff4cba" stroke-width="2.500" />
        <path d={route} stroke="#fa6482" stroke-width="1" stroke-dasharray="17 5 9 3" />
        <path d={route} stroke="#f0f" stroke-width="3" stroke-opacity=".6" stroke-dasharray="3 19 5 11 2 24 6 15" />
        <path d={smooth(gap)} stroke="#a07cae" />
        <path d={specks} stroke="#f3f" stroke-opacity=".65" shape-rendering="crispEdges" />
        <g stroke="#f06a80">
          <path d="M623 263l19 7M889 504l18-1M950 551l10 11h10M1033 567l10 8M940 523l10 6-3 7M1072 688h8M1135 953l8-3M1108 850h7M620 264l14-1" />
        </g>
        <path d="M942 523l9 17M950 535l-6-8M1018 564l4-2M1037 576l8 10M1042 585l8 2 2 8-5-2zM1051 588l-6-3M1130 800h5v6h-5zM1135 795v16M1134 797v12M1160 1003l8 22" stroke="#f0f" />
        <path d="M1039 587h18" stroke="#9a80a8" />
        <path d="M1002 545l9 9M735 385l8 3M1114 763l10 7" stroke="#a5877c" stroke-width="2" />
        <path d="M1072 664l9-1M1069 666c-2 1-2 4 1 5M1073 676l5 13M1062 621h3M978 549h3M626 259h3M1121 767h3M1117 892h2M1157 992h3M1109 853h2M1096 725h4M908 500h2" stroke="#222" />
        <path d="M1129 807l4 1 5 5M1160 1005l9 1" stroke="#f01c1c" stroke-width="1.500" />
        <path d="M1167 1002h3" stroke="#1a1" stroke-width="1.500" />
        <path d="M1167 1020l18 46" stroke="#a0109a" stroke-width="1.500" />
        <path d="M1186 1068l1 3" stroke="#4cc" stroke-width="2" />
      </svg>
    </section>
  </main>

  <footer>
    <label class="search"><svg viewBox="0 0 12 12" aria-hidden="true"><circle cx="5" cy="5" r="3.500" /><path d="M8 8l3.500 3.500" /></svg><input type="text" placeholder="搜索 (Ctrl+K)" aria-label="搜索" /></label>
    <span class="fill"></span>
    <label for="coord">坐标</label>
    <input id="coord" class="field coord" type="text" value="-89° , 122°" />
    <svg class="mouse" viewBox="0 0 16 16" aria-hidden="true"><path d="M2 3l8 9M5 1l8 9M1 8l6 6M11 4l4-3" stroke="#333" stroke-width="1.800" /><ellipse cx="9" cy="9" rx="3" ry="5" fill="#ccc" stroke="#222" stroke-width="1.500" transform="rotate(-40 9 9)" /></svg>
    <label for="scale">比例</label>
    <div class="field combo"><input id="scale" type="text" value="1:907622" /><button aria-label="比例列表"><i class="down"></i></button></div>
    <svg class="lock" viewBox="0 0 12 16" aria-hidden="true"><path d="M2.500 8V4.500c0-4 7-4 7 0V8" fill="none" stroke="#888" stroke-width="1.500" /><rect y="7.500" width="12" height="8" rx="1" fill="#5a5a5a" /></svg>
    <label for="zoom">放大镜</label>
    <div class="field spin"><input id="zoom" type="text" value="100%" /><span><i class="up"></i><i class="down"></i></span></div>
    <label class="angle" for="angle">旋转角度</label>
    <div class="field spin"><input id="angle" type="text" value="0.0°" /><span><i class="up"></i><i class="down"></i></span></div>
    <label class="render"><input type="checkbox" checked />渲染</label>
    <button class="crs"><svg viewBox="0 0 14 14" aria-hidden="true"><circle cx="7" cy="7" r="6" fill="#888" /><path d="M7 0v14M0 7h14M2 3.500h10M2 10.500h10" stroke="#ddd" stroke-width=".7" /><ellipse cx="7" cy="7" rx="3" ry="6" fill="none" stroke="#ddd" stroke-width=".7" /><circle cx="7" cy="7" r="6" fill="none" stroke="#666" /></svg>EPSG:4326</button>
    <button class="chat" aria-label="消息日志"><svg viewBox="0 0 16 14"><ellipse cx="8" cy="6" rx="7.500" ry="6" fill="#4a4a4a" /><path d="M10 11l4 3-1-5z" fill="#4a4a4a" /><path d="M3.500 6h2M7 6h2M10.500 6h2" stroke="#fff" stroke-width="2" /></svg></button>
  </footer>
  <div class="watermark">CSDN @weixin_42083084</div>
</div>

<style>
  :global(body) { background: #efefef; }
  .app {
    position: relative; display: flex; flex-direction: column; height: 100vh; overflow: hidden;
    background: #efefef; color: #000; font: 12px/16px "Noto Sans", "Noto Sans CJK SC", sans-serif;
  }
  button { margin: 0; padding: 0; border: 0; background: none; color: inherit; font: inherit; }
  input { margin: 0; padding: 0; border: 0; color: inherit; font: inherit; min-width: 0; outline: none; }
  h1, h2, p, ul { margin: 0; padding: 0; font: inherit; list-style: none; }
  .paints { position: absolute; }
  .symbols { display: none; }

  .title { display: flex; align-items: center; height: 23px; padding-left: 2px; background: linear-gradient(90deg, #ebf8d9 0, #f2f5e0 18%, #f5f6cc 38%, #f9f6d0 45%, #faf3e0 56%, #f2f2ea 75%, #eef3fa 88%, #eef3fa 100%); }
  .title h1 { flex: 1; margin-left: 6px; font: 12px/16px "Open Sans", "Noto Sans CJK SC", sans-serif; }
  .logo { width: 16px; height: 16px; }
  .window-buttons { display: flex; padding-right: 4px; }
  .window-buttons button { display: grid; place-items: center; width: 45px; height: 22px; }
  .window-buttons svg { width: 12px; height: 12px; fill: none; stroke: #111; }

  .menu { display: flex; gap: 15px; height: 21px; padding-left: 11px; border-bottom: 1px solid #d0d0d0; }
  .menu button { line-height: 21px; white-space: nowrap; }

  .toolbar { display: flex; align-items: center; height: 38px; border-bottom: 1px solid #b3b3b3; background: linear-gradient(#fafafa, #eee); }
  .toolbar:nth-last-child(4) { height: 37px; }
  .grip { width: 16px; height: 17px; padding: 0 4px 0 8px; box-sizing: border-box; background: radial-gradient(circle, #bbb 1px, transparent 1px) 8px 0 / 3px 3px content-box; }
  .grip:first-child { width: 13px; padding-left: 5px; }
  .sep { width: 1px; height: 20px; margin: 0 3px; background: #c8c8c8; }
  .tool { display: grid; place-items: center; width: 33px; height: 31px; flex: none; border-radius: 2px; }
  .tool svg { width: 24px; height: 24px; }
  .tool.active { background: #dcdcdc; box-shadow: inset 0 0 0 1px #b0b0b0; }
  .tool:disabled svg { opacity: .38; filter: grayscale(.5); }
  .drop { width: 12px; height: 24px; display: grid; place-items: center; }
  .drop::before, .up, .down { content: ""; border: solid transparent; border-width: 4px 4px 0; border-top-color: #555; width: 0; height: 0; }
  .drop:disabled::before { border-top-color: #aaa; }
  .up { border-width: 0 4px 4px; border-bottom-color: #555; }

  main { display: flex; flex: 1; min-height: 0; }
  aside { display: flex; flex-direction: column; width: 299px; padding-top: 1px; box-sizing: border-box; }
  .dock-title { display: flex; align-items: center; gap: 3px; height: 19px; padding: 0 8px 0 4px; }
  .dock-title h2 { flex: 1; }
  .dock-btn { width: 11px; height: 11px; display: grid; }
  .dock-btn svg { width: 11px; height: 11px; fill: none; stroke: #666; }
  .dock-tools { display: flex; align-items: center; height: 30px; padding-left: 3px; }
  .dock-tools button { display: grid; place-items: center; width: 25px; height: 20px; }
  .dock-tools .drop { width: 12px; }
  .dock-tools svg { width: 16px; height: 16px; }
  .tree-box, .layer-box { position: relative; width: 293px; box-sizing: border-box; margin-top: 1px; border: 1px solid #b3b3b3; background: #fff; }
  .tree-box { display: flex; height: 380px; }
  .tree { flex: 1; overflow: hidden; }
  .tree li { display: flex; align-items: center; height: 19px; white-space: nowrap; width: 252px; box-sizing: border-box; }
  .tree svg { width: 16px; height: 16px; margin: 0 6px 0 7px; }
  .level-0 { padding-left: 3px; }
  .level-1 { padding-left: 19px; }
  .level-2 { padding-left: 35px; }
  .level-3 { padding-left: 51px; }
  .twist { width: 9px; display: grid; place-items: center; }
  .twist::before { content: ""; border: solid transparent; border-width: 4px 0 4px 4px; border-left-color: #555; }
  .twist.open::before { border-width: 4px 4px 0; border-color: #555 transparent transparent; }
  .tree .selected { background: linear-gradient(90deg, #0074d9 86px, #1683de 86px, #1683de 100%); color: #fff; }
  .selected .twist::before { border-left-color: #10253c; }
  .scroll { display: flex; flex-direction: column; width: 13px; border-left: 1px solid #b3b3b3; }
  .scroll button { height: 13px; display: grid; place-items: center; background: #f8f8f8; }
  .track { flex: 1; padding-top: 94px; border: solid #b3b3b3; border-width: 1px 0; background: #e2e2e2; }
  .thumb { height: 54px; border: solid #b3b3b3; border-width: 1px 0; background: linear-gradient(#f4f4f4, #fff); }
  .mark { position: absolute; border: 4px solid #fb4a46; border-radius: 6px; box-sizing: border-box; pointer-events: none; }
  .mark-tree { left: 34px; top: 202px; width: 149px; height: 40px; }
  .mark-layer { left: 17px; top: -6px; width: 269px; height: 32px; }
  .splitter { height: 5px; display: grid; justify-items: center; }
  .splitter span { width: 16px; height: 3px; background: radial-gradient(circle, #bbb 1px, transparent 1px) 0 0 / 3px 3px; }
  .layers { display: flex; flex-direction: column; flex: 1; min-height: 0; }
  .layer-box { flex: 1; }
  .layer { display: flex; align-items: center; height: 19px; padding-right: 11px; background: #efefef; }
  .layer label { display: flex; align-items: center; flex: 1; padding-left: 23px; }
  .layer label svg { width: 16px; height: 16px; margin: 0 6px; }
  .layer b { text-decoration: underline; }
  .layer button { display: grid; place-items: center; width: 18px; height: 18px; background: #e6e6e6; }
  .layer button svg { width: 16px; height: 16px; }
  input[type="checkbox"] { appearance: none; width: 14px; height: 14px; border: 1px solid #a8a8a8; background: #fff; display: grid; place-items: center; }
  input[type="checkbox"]:checked::before { content: ""; width: 3px; height: 7px; border: solid #000; border-width: 0 2px 2px 0; transform: rotate(40deg); }

  .canvas { flex: 1; min-width: 0; display: flex; flex-direction: column; border: solid #b3b3b3; border-width: 0 1px 1px; background: #fff; }
  .message { display: flex; align-items: center; height: 28px; box-sizing: border-box; margin-top: 1px; padding: 0 22px 0 10px; border: solid #dba800; border-width: 1px 0; background: #ffc800; }
  .warn { width: 22px; height: 20px; }
  .message p { flex: 1; margin-left: 10px; padding-top: 3px; font-family: "Open Sans", "Noto Sans CJK SC", sans-serif; }
  .mono { font: 10px/16px "Liberation Mono", monospace; margin-right: 3px; }
  .spin-old { display: grid; gap: 2px; margin-right: 6px; }
  .spin-old i { width: 12px; height: 8px; border: 1px solid; border-color: #fff2a8 #80733f #80733f #fff2a8; }
  .details { width: 80px; height: 20px; border: 1px solid #b0a070; border-radius: 2px; background: linear-gradient(#fff, #ececec); line-height: 18px; }
  .close { margin-left: 31px; width: 18px; height: 18px; }
  .close svg { width: 18px; height: 18px; display: block; }
  .map { flex: 1; min-height: 0; width: 100%; display: block; }

  footer { display: flex; align-items: center; height: 28px; padding: 0 8px 0 3px; font-size: 11px; }
  .fill { flex: 1; }
  .search { display: flex; align-items: center; width: 201px; height: 22px; box-sizing: border-box; border: 1px solid #b3b3b3; border-radius: 2px; background: #fff; }
  .search svg { width: 12px; height: 12px; margin: 0 8px 0 9px; fill: none; stroke: #777; stroke-width: 1.5; }
  .search input { flex: 1; background: none; font: 11px/16px "Liberation Mono", "Noto Sans CJK SC", monospace; }
  .search input::placeholder { color: #707070; }
  .field { height: 22px; box-sizing: border-box; border: 1px solid #b3b3b3; border-radius: 2px; background: #fff; font: 10px/16px "Liberation Mono", monospace; margin-left: 3px; }
  .coord { width: 84px; padding-left: 6px; margin-right: 5px; }
  .mouse { width: 16px; height: 16px; margin-right: 14px; }
  .combo { display: flex; width: 83px; margin-right: 12px; }
  .combo input, .spin input { flex: 1; width: 40px; padding-left: 4px; background: none; }
  .combo button { width: 19px; border-left: 1px solid #b3b3b3; display: grid; place-items: center; background: #f4f4f4; }
  .lock { width: 12px; height: 16px; margin-right: 9px; }
  .spin { display: flex; width: 88px; margin-right: 8px; }
  .spin span { width: 13px; border-left: 1px solid #b3b3b3; display: grid; align-content: center; justify-content: center; gap: 4px; background: #f6f6f6; }
  .angle { margin: 0 2px; }
  .render { display: flex; align-items: center; gap: 5px; margin-right: 17px; }
  .crs { display: flex; align-items: center; gap: 3px; font: 10px/16px "Liberation Mono", monospace; }
  .crs svg { width: 14px; height: 14px; }
  .chat { margin-left: 28px; }
  .chat svg { width: 16px; height: 14px; display: block; }
  .watermark { position: absolute; right: 3px; bottom: 12px; font: 37px/40px "Liberation Sans", sans-serif; color: rgba(225, 225, 225, .75); text-shadow: 1px 1px 1px rgba(90, 90, 90, .6); pointer-events: none; }
</style>
